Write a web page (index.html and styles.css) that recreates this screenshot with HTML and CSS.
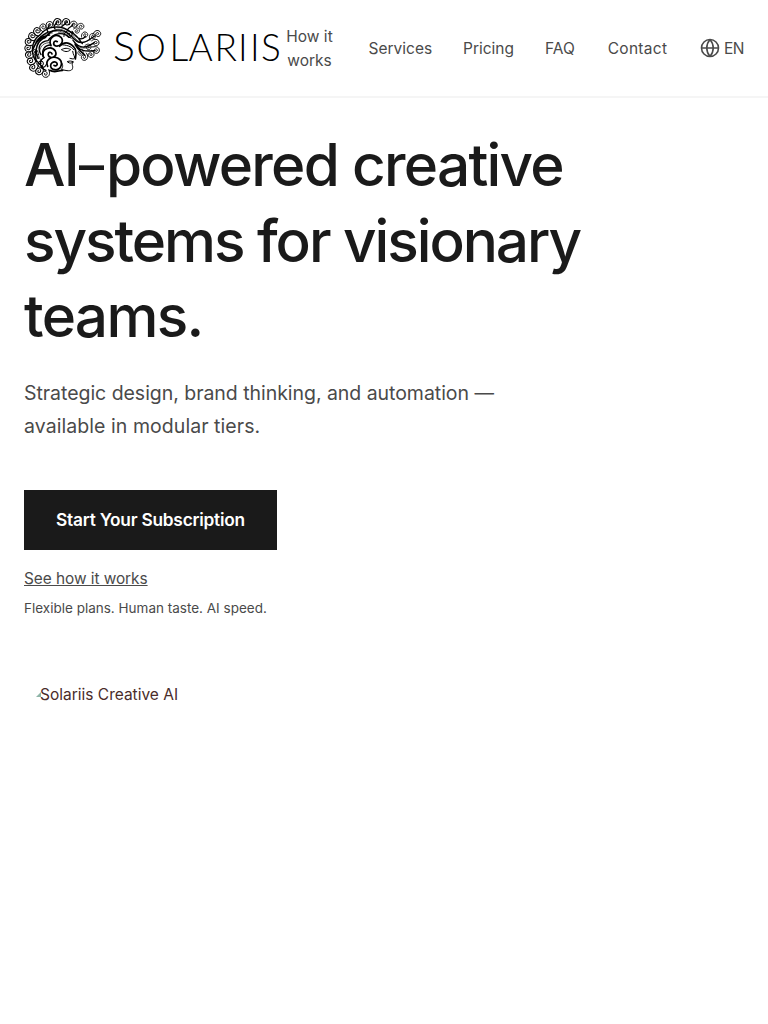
FILE: index.html
```html
<!DOCTYPE html>
<html lang="en">
<head>
<meta charset="utf-8">
<title>Solariis</title>
<link rel="stylesheet" href="styles.css">
</head>
<body>
<header class="header">
  <a class="brand" aria-label="Solariis">
    <svg class="brand-mark" viewBox="24 24 234 180" fill="none" stroke="#000" stroke-width="3" stroke-linecap="round">
      <defs>
        <path id="curl" d="M-9 13C-15 3-11-10 0-10C12-10 13 6 4 8C-4 9-7 0-2-3C2-5 5-1 3 2"/>
      </defs>
      <path stroke-width="4" d="M62 155C42 132 45 92 73 74C92 48 135 42 164 67C187 76 190 91 199 101M67 145C53 119 65 91 88 83C108 54 142 54 164 78M75 134C62 111 73 95 96 92C112 69 139 64 160 82M83 141C74 119 87 105 104 105M55 108C67 77 95 63 121 62M49 125C58 92 78 78 101 75M80 170C62 160 55 141 58 123M90 181C69 174 68 151 85 142M168 64C188 93 199 89 208 80M166 78C193 113 213 94 236 78M171 91C194 122 213 112 235 98M175 96C190 127 211 124 237 122M177 104C189 126 201 127 207 136M154 61C159 48 167 54 171 42M137 53C135 45 149 46 151 36M117 56C108 49 121 42 123 36M96 66C88 55 99 52 100 45"/>
      <path stroke-width="5" d="M131 109C146 91 166 99 177 116C182 127 180 135 178 147M105 107C94 83 120 68 135 82C145 94 134 111 119 108C108 103 114 89 124 95M81 139C76 114 107 106 118 123C126 140 103 150 97 136C94 126 106 124 108 132M95 169C86 149 108 137 125 144C145 154 136 181 117 179C98 177 101 154 118 156C130 161 120 172 114 166M101 181C116 190 133 181 140 181"/>
      <path d="M134 104C152 105 165 108 173 119M137 119C145 113 156 114 164 119C156 127 144 126 137 119M170 124C171 134 178 140 175 145C171 149 166 145 162 145M154 155C162 151 166 154 172 155C168 160 162 161 156 157M171 157C167 162 169 165 170 169C171 180 165 183 153 182L137 179M136 157C143 165 140 174 136 178"/>
      <path stroke-width="2" d="M64 146C51 112 69 81 92 80C109 53 137 50 161 73M71 126C72 105 86 98 101 98M84 85C101 60 124 57 147 70M61 95C76 77 88 70 109 69M77 154C66 140 66 132 70 121M128 68C145 68 158 82 171 88M170 74C188 105 206 99 222 89M181 105C196 121 216 112 231 110M52 140C60 150 58 160 66 168M48 108C56 92 64 88 74 80"/>
      <g stroke-width="3">
        <use href="#curl" transform="translate(101 44) scale(.95)"/>
        <use href="#curl" transform="translate(125 36) rotate(25)"/>
        <use href="#curl" transform="translate(151 36) rotate(20)"/>
        <use href="#curl" transform="translate(174 43) rotate(50) scale(.9)"/>
        <use href="#curl" transform="translate(195 49) rotate(50) scale(.85)"/>
        <use href="#curl" transform="translate(81 51) rotate(-35) scale(.9)"/>
        <use href="#curl" transform="translate(63 63) rotate(-50)"/>
        <use href="#curl" transform="translate(48 78) rotate(-60)"/>
        <use href="#curl" transform="translate(37 95) rotate(-80) scale(.95)"/>
        <use href="#curl" transform="translate(36 115) rotate(-100) scale(.95)"/>
        <use href="#curl" transform="translate(38 135) rotate(-110) scale(.95)"/>
        <use href="#curl" transform="translate(44 154) rotate(-130)"/>
        <use href="#curl" transform="translate(51 173) rotate(-140)"/>
        <use href="#curl" transform="translate(69 184) rotate(-160)"/>
        <use href="#curl" transform="translate(89 192) rotate(180)"/>
        <use href="#curl" transform="translate(183 62) rotate(80) scale(.75)"/>
        <use href="#curl" transform="translate(207 74) rotate(20) scale(.8)"/>
        <use href="#curl" transform="translate(230 79) scale(.85)"/>
        <use href="#curl" transform="translate(245 71) rotate(50) scale(.9)"/>
        <use href="#curl" transform="translate(240 98) rotate(80) scale(.9)"/>
        <use href="#curl" transform="translate(241 121) rotate(100) scale(.9)"/>
        <use href="#curl" transform="translate(225 134) rotate(150) scale(.85)"/>
        <use href="#curl" transform="translate(205 142) rotate(170) scale(.9)"/>
        <use href="#curl" transform="translate(193 128) rotate(170) scale(.75)"/>
        <use href="#curl" transform="translate(217 111) rotate(60) scale(.8)"/>
        <use href="#curl" transform="translate(158 73) rotate(30)"/>
        <use href="#curl" transform="translate(76 163) rotate(-130)"/>
        <use href="#curl" transform="translate(58 126) rotate(-90) scale(.8)"/>
      </g>
    </svg>
    <svg class="brand-name" viewBox="0 0 168 60">
      <text class="word" y="43"><tspan class="initial" x="1">S</tspan><tspan x="24.5 57.5 76.5 102.5 126 138 149">OLARIIS</tspan></text>
    </svg>
  </a>
  <nav class="nav">
    <a class="how">How it<br>works</a>
    <a class="services">Services</a>
    <a class="pricing">Pricing</a>
    <a class="faq">FAQ</a>
    <a class="contact">Contact</a>
    <a class="lang">
      <svg class="globe" viewBox="0 0 20 20" fill="none" stroke="#4a4a4a" stroke-width="1.6"><circle cx="10" cy="10" r="8.5"/><path d="M1.5 10h17M10 1.5C5.7 6.5 5.7 13.5 10 18.5M10 1.5c4.3 5 4.3 12 0 17"/></svg>
      <span>EN</span>
    </a>
  </nav>
</header>
<main class="hero">
  <h1 class="title"><span class="t1">AI<span class="dash">–</span>powered creative</span><br><span class="t2">systems for visionary</span><br><span class="t3">teams.</span></h1>
  <p class="lead"><span class="l1">Strategic design, brand thinking, and automation —</span><br><span class="l2">available in modular tiers.</span></p>
  <a class="cta"><span>Start Your Subscription</span></a>
  <a class="more">See how it works</a>
  <p class="note">Flexible plans. Human taste. AI speed.</p>
  <div class="picture">
    <svg class="missing" viewBox="0 0 6 6"><path d="M0 6L6 0V6Z" fill="#8fb5a8"/></svg><span class="alt">Solariis Creative AI</span>
  </div>
</main>
</body>
</html>
```
FILE: styles.css
```css
* { box-sizing: border-box; }
body { margin: 0; background: #fff; color: #4a4a4a; font-family: Inter, "Liberation Sans", sans-serif; }
h1, p { margin: 0; white-space: nowrap; }
.header { display: flex; justify-content: space-between; align-items: center; height: 98px; padding: 0 24px; border-bottom: 2px solid #f5f5f5; }
.brand { display: flex; gap: 10px; }
.brand-mark { width: 78px; height: 60px; overflow: visible; }
.brand-name { width: 168px; height: 60px; overflow: visible; }
.word { font-family: Lato, sans-serif; font-weight: 300; font-size: 37px; fill: #000; }
.initial { font-size: 41px; }
.nav { display: flex; align-items: center; gap: 32px; padding-top: 2px; font-size: 15.5px; line-height: 24px; font-weight: 400; text-align: center; white-space: nowrap; }
.how { width: 56px; padding-left: 2px; }
.services { width: 62.5px; }
.pricing { width: 50px; }
.faq { width: 30px; }
.contact { width: 61px; letter-spacing: 0.3px; }
.lang { display: flex; align-items: center; gap: 4px; width: 44px; letter-spacing: -0.6px; }
.globe { flex: none; width: 20px; height: 20px; margin-top: -2px; }
.hero { padding: 29px 24px; }
.title { font-size: 58.5px; line-height: 75.5px; font-weight: 500; color: #1a1a1a; letter-spacing: -2.05px; }
.t1 { letter-spacing: -1.75px; }
.t3 { letter-spacing: -1.7px; }
.dash { display: inline-block; width: 28px; padding-left: 1px; font-size: 50px; line-height: 1; vertical-align: 3px; }
.lead { margin-top: 23px; font-size: 19.5px; line-height: 33px; }
.l1 { letter-spacing: -0.04px; }
.l2 { letter-spacing: 0.06px; }
.cta { display: flex; align-items: center; justify-content: center; width: 253px; height: 60px; margin-top: 47px; background: #1a1a1a; color: #fff; font-size: 17.3px; font-weight: 600; letter-spacing: -0.23px; white-space: nowrap; }
.more { display: block; margin-top: 17px; font-size: 15.4px; line-height: 24px; letter-spacing: -0.05px; text-decoration: underline; }
.note { margin-top: 7px; font-size: 13.5px; line-height: 21px; }
.picture { display: flex; align-items: center; margin-top: 64px; padding-left: 12px; height: 24px; color: #4a2c2a; font-size: 15.5px; white-space: nowrap; }
.missing { width: 5px; height: 5px; margin-right: -1px; }
```
